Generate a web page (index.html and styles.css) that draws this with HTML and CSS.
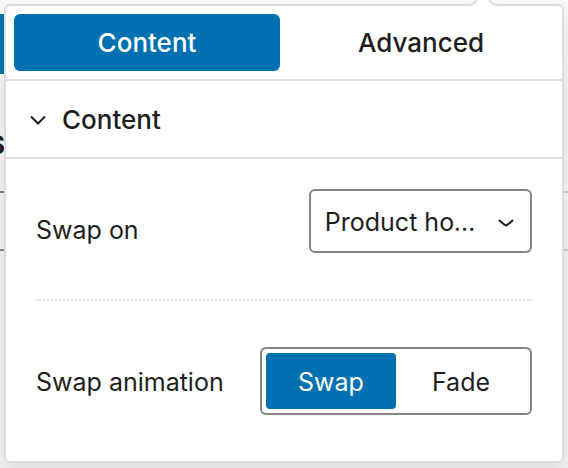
FILE: index.html
```html
<!DOCTYPE html>
<html lang="en">
<head>
<meta charset="utf-8">
<meta name="viewport" content="width=device-width, initial-scale=1">
<title>Swap settings</title>
<link rel="stylesheet" href="styles.css">
</head>
<body>
<div class="backdrop" aria-hidden="true">
  <div class="backdrop-button"></div>
  <div class="backdrop-title">S</div>
  <div class="backdrop-field"></div>
</div>
<main class="popover">
  <svg class="popover-arrow" viewBox="0 0 32 6" aria-hidden="true">
    <path class="arrow-fill" d="M2 6 4 5 9 0H23L28 5 30 6Z"/>
    <path class="arrow-line" d="M0 5H2Q5 5 7 3L10 0M22 0 25 3Q27 5 30 5H32"/>
  </svg>
  <div class="tabs" role="tablist">
    <button class="tab tab-active" type="button" role="tab" aria-selected="true">Content</button>
    <button class="tab" type="button" role="tab" aria-selected="false">Advanced</button>
  </div>
  <button class="section-header" type="button" aria-expanded="true">
    <svg class="chevron" viewBox="0 0 18 12" aria-hidden="true"><path d="M2 2.5 9 9.5 16 2.5"/></svg>
    <span>Content</span>
  </button>
  <div class="row row-select">
    <label class="label" for="swap-on">Swap on</label>
    <div class="select-wrap">
      <select class="select" id="swap-on">
        <option>Product hover</option>
      </select>
      <svg class="chevron select-chevron" viewBox="0 0 18 12" aria-hidden="true"><path d="M2 3Q6 7 9 8.500Q12 7 16 3"/></svg>
    </div>
  </div>
  <div class="divider"></div>
  <div class="row row-toggle">
    <span class="label" id="swap-animation">Swap animation</span>
    <div class="toggle" role="group" aria-labelledby="swap-animation">
      <button class="toggle-option toggle-active" type="button" aria-pressed="true">Swap</button>
      <button class="toggle-option" type="button" aria-pressed="false">Fade</button>
    </div>
  </div>
</main>
</body>
</html>
```
FILE: styles.css
```css
* {
  box-sizing: border-box;
}

body {
  margin: 0;
  padding: 4px 4px 5px;
  background: #f3f3f3;
  color: #1e1e1e;
  font-family: Inter, "Liberation Sans", sans-serif;
  font-size: 25px;
  line-height: 32px;
  overflow: hidden;
}

button,
select {
  font: inherit;
  color: inherit;
  border: 0;
  background: transparent;
}

/* Page behind the popover */
.backdrop {
  position: absolute;
  inset: 0;
  overflow: hidden;
  background: linear-gradient(#fafafa, #f3f3f3 60px, #f0f0f0);
}

.backdrop-button {
  width: 16px;
  height: 60px;
  margin-top: 14px;
  background: #0071b0;
}

.backdrop-title {
  margin: 55px 0 0 -12px;
  font-size: 26px;
  font-weight: 700;
}

.backdrop-field {
  height: 60px;
  margin-top: 30px;
  border: solid #858585;
  border-width: 2px 0;
  border-image: linear-gradient(to right, #858585 50%, #cccccc 50%) 2;
}

.popover {
  position: relative;
  background: #ffffff;
  border: 2px solid #dddddd;
  border-radius: 6px;
  box-shadow: 0 4px 12px rgba(0, 0, 0, 0.08);
}

.popover-arrow {
  position: absolute;
  top: -6px;
  right: 63px;
  width: 32px;
  height: 6px;
}

.arrow-fill {
  fill: #ffffff;
}

.arrow-line {
  fill: none;
  stroke: #dddddd;
  stroke-width: 2;
}

.tabs {
  display: grid;
  grid-template-columns: 1fr 1fr;
  gap: 8px;
  padding: 8px;
  border-bottom: 2px solid #dddddd;
}

.tab {
  height: 57px;
  padding: 0;
  border-radius: 6px;
  font-size: 26px;
  font-weight: 500;
}

.tab-active,
.toggle-active {
  background: #0071b0;
  color: #ffffff;
}

.section-header {
  display: flex;
  align-items: center;
  gap: 15px;
  width: 100%;
  height: 78px;
  padding: 2px 23px 0;
  border-bottom: 2px solid #dddddd;
  font-size: 26px;
  font-weight: 500;
}

.chevron {
  width: 18px;
  height: 12px;
  fill: none;
  stroke: #1e1e1e;
  stroke-width: 2;
}

.row {
  display: flex;
  justify-content: space-between;
  align-items: center;
}

.label {
  padding-top: 2px;
}

.row-select {
  padding: 30px;
}

.row-toggle {
  padding: 46px 30px;
}

.select-wrap {
  position: relative;
  width: 45%;
  padding-bottom: 16px;
}

.select {
  display: block;
  width: 100%;
  height: 64px;
  padding: 2px 50px 0 14px;
  border: 2px solid #858585;
  border-radius: 6px;
  appearance: none;
  overflow: hidden;
  text-overflow: ellipsis;
  white-space: nowrap;
}

.select-chevron {
  position: absolute;
  top: 28px;
  right: 17px;
  pointer-events: none;
}

.divider {
  margin: 0 30px;
  border-top: 2px dotted #dddddd;
}

.toggle {
  display: grid;
  grid-template-columns: 130px 130px;
  padding: 4px;
  border: 2px solid #858585;
  border-radius: 6px;
}

.toggle-option {
  height: 56px;
  padding: 2px 0 0;
  border-radius: 4px;
}
```
